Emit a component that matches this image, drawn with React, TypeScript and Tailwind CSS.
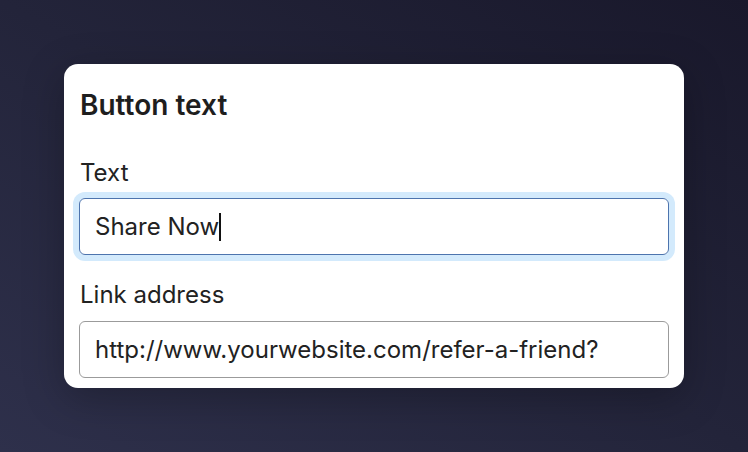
import React from "react";

export default function App() {
  return (
    <div
      className="w-[748px] h-[452px] bg-[linear-gradient(to_bottom_left,#19182b,#23243a_50%,#2e304b)] pt-[64px] pl-[64px]"
      style={{ fontFamily: "Inter, 'Noto Sans', sans-serif" }}
    >
      <div className="w-[620px] h-[324px] bg-white rounded-[14px] px-[15px] pt-[23px] flex flex-col shadow-[0_10px_40px_rgba(0,0,0,0.25)]">
        <h2 className="text-[28px] leading-[36px] font-semibold text-[#1e1e1e] pl-[1px]">
          Button text
        </h2>
        <label className="mt-[36px] text-[24px] leading-[28px] text-[#222] pl-[1px]">
          Text
        </label>
        <div className="mt-[11px] h-[57px] rounded-[6px] border border-[#4d74ae] ring-[6px] ring-[#d3eafc] flex items-center pl-[15px] text-[24px] text-[#222]">
          <span>Share Now</span>
          <span className="inline-block w-[2px] h-[28px] bg-[#111]" />
        </div>
        <label className="mt-[26px] text-[24px] leading-[28px] text-[#222] pl-[1px]">
          Link address
        </label>
        <div className="mt-[12px] h-[57px] rounded-[6px] border border-[#9b9b9b] flex items-center pl-[15px] text-[24px] text-[#222]">
          <span>http://www.yourwebsite.com/refer-a-friend?</span>
        </div>
      </div>
    </div>
  );
}
